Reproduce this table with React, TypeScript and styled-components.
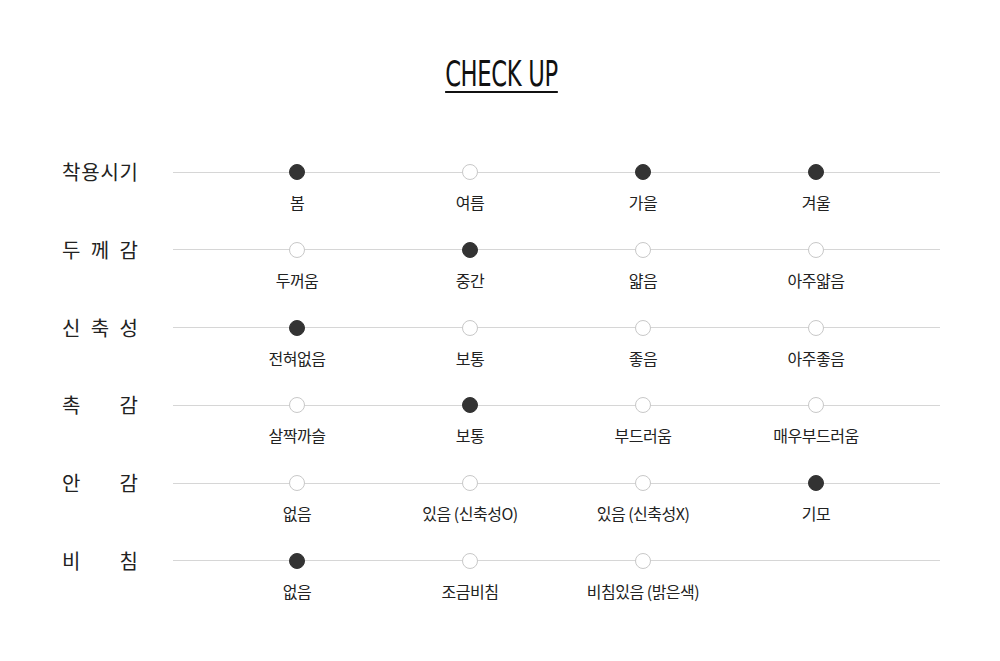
import styled, { createGlobalStyle } from 'styled-components';

interface CheckRow {
	label: string;
	options: { name: string; on: boolean }[];
}

const rows: CheckRow[] = [
	{
		label: '착용시기',
		options: [
			{ name: '봄', on: true },
			{ name: '여름', on: false },
			{ name: '가을', on: true },
			{ name: '겨울', on: true },
		],
	},
	{
		label: '두께감',
		options: [
			{ name: '두꺼움', on: false },
			{ name: '중간', on: true },
			{ name: '얇음', on: false },
			{ name: '아주얇음', on: false },
		],
	},
	{
		label: '신축성',
		options: [
			{ name: '전혀없음', on: true },
			{ name: '보통', on: false },
			{ name: '좋음', on: false },
			{ name: '아주좋음', on: false },
		],
	},
	{
		label: '촉감',
		options: [
			{ name: '살짝까슬', on: false },
			{ name: '보통', on: true },
			{ name: '부드러움', on: false },
			{ name: '매우부드러움', on: false },
		],
	},
	{
		label: '안감',
		options: [
			{ name: '없음', on: false },
			{ name: '있음 (신축성O)', on: false },
			{ name: '있음 (신축성X)', on: false },
			{ name: '기모', on: true },
		],
	},
	{
		label: '비침',
		options: [
			{ name: '없음', on: true },
			{ name: '조금비침', on: false },
			{ name: '비침있음 (밝은색)', on: false },
		],
	},
];

export default function App() {
	return (
		<>
			<GlobalStyle />
			<Page>
				<TitleWrap>
					<Title>CHECK UP</Title>
				</TitleWrap>
				<Table>
					{rows.map((row) => (
						<Row key={row.label}>
							<RowLabel>
								{row.label.split('').map((ch, i) => (
									<span key={i}>{ch}</span>
								))}
							</RowLabel>
							<Track>
								{row.options.map((opt) => (
									<Option key={opt.name}>
										<Dot on={opt.on} />
										<OptionName>{opt.name}</OptionName>
									</Option>
								))}
							</Track>
						</Row>
					))}
				</Table>
			</Page>
		</>
	);
}

const GlobalStyle = createGlobalStyle`
	body {
		margin: 0;
		background: #fff;
		font-family: 'Noto Sans CJK KR', 'Noto Sans', sans-serif;
		color: #222;
	}
`;

const Page = styled.div`
	width: 1000px;
	height: 661px;
	padding: 57px 60px 0 62px;
	box-sizing: border-box;
`;

const TitleWrap = styled.div`
	display: flex;
	justify-content: center;
`;

const Title = styled.h1`
	margin: 0;
	font-family: 'Liberation Sans Narrow', 'DejaVu Sans Condensed', sans-serif;
	font-weight: 400;
	font-size: 36px;
	line-height: 34px;
	color: #111;
	letter-spacing: -0.5px;
	padding-bottom: 0;
	border-bottom: 2px solid #111;
	transform: scaleX(0.7);
`;

const Table = styled.div`
	margin-top: 71px;
	display: flex;
	flex-direction: column;
`;

const Row = styled.div`
	display: grid;
	grid-template-columns: 111px 1fr;
	height: 77.8px;
`;

const RowLabel = styled.div`
	width: 76px;
	display: flex;
	justify-content: space-between;
	font-size: 20px;
	line-height: 26px;
	color: #222;
	margin-top: -5px;
	height: 26px;
`;

const Track = styled.div`
	position: relative;
	display: grid;
	grid-template-columns: repeat(4, 1fr);
	padding: 0 37.5px;
	align-items: start;

	&::before {
		content: '';
		position: absolute;
		left: 0;
		right: 0;
		top: 7.5px;
		height: 1px;
		background: #d6d6d6;
	}
`;

const Option = styled.div`
	position: relative;
	display: flex;
	flex-direction: column;
	align-items: center;
	gap: 11px;
`;

const Dot = styled.span<{ on: boolean }>`
	width: 16px;
	height: 16px;
	border-radius: 50%;
	box-sizing: border-box;
	background: ${({ on }) => (on ? '#333' : '#fff')};
	border: 1px solid ${({ on }) => (on ? '#333' : '#c8c8c8')};
`;

const OptionName = styled.span`
	font-size: 16px;
	line-height: 22px;
	color: #222;
	white-space: nowrap;
	letter-spacing: -0.5px;
`;
